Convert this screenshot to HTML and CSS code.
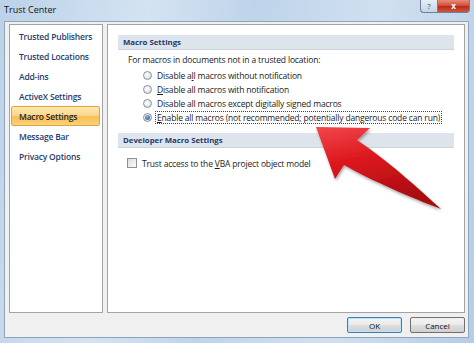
FILE: index.html
```html
<!DOCTYPE html>
<html lang="en">
<head>
  <meta charset="UTF-8">
  <title>Trust Center</title>
  <link rel="stylesheet" href="styles.css">
</head>
<body>
  <div class="window">
    <div class="titlebar">
      <span class="title">Trust Center</span>
      <div class="caption">
        <span class="cap help">?</span>
        <span class="cap close">x</span>
      </div>
    </div>

    <div class="dialog">
      <div class="panes">
        <ul class="nav">
          <li>Trusted Publishers</li>
          <li>Trusted Locations</li>
          <li>Add-ins</li>
          <li>ActiveX Settings</li>
          <li class="active">Macro Settings</li>
          <li>Message Bar</li>
          <li>Privacy Options</li>
        </ul>

        <div class="content">
          <div class="group">
            <div class="group-head">Macro Settings</div>
            <div class="lead">For macros in documents not in a trusted location:</div>
            <div class="opts">
              <label class="opt"><span class="radio"></span><span>Disable a<u>l</u>l macros without notification</span></label>
              <label class="opt"><span class="radio"></span><span><u>D</u>isable all macros with notification</span></label>
              <label class="opt"><span class="radio"></span><span>Disable all macros except di<u>g</u>itally signed macros</span></label>
              <label class="opt"><span class="radio on"></span><span class="focus"><u>E</u>nable all macros (not recommended; potentially dangerous code can run)</span></label>
            </div>
          </div>

          <div class="group">
            <div class="group-head">Developer Macro Settings</div>
            <label class="check-row"><span class="check"></span><span>Trust access to the <u>V</u>BA project object model</span></label>
          </div>
        </div>
      </div>

      <div class="footer">
        <button type="button" class="btn default">OK</button>
        <button type="button" class="btn">Cancel</button>
      </div>
    </div>

    <!-- red annotation arrow drawn over the dialog -->
    <svg class="arrow" viewBox="0 0 474 343" width="474" height="343">
      <defs>
        <linearGradient id="red" x1="0" y1="0" x2="0.3" y2="1">
          <stop offset="0" stop-color="#f2474b"/>
          <stop offset="0.45" stop-color="#dc171d"/>
          <stop offset="1" stop-color="#a90c11"/>
        </linearGradient>
        <filter id="shadow" x="-20%" y="-20%" width="140%" height="140%">
          <feDropShadow dx="1" dy="2" stdDeviation="1.5" flood-color="#000" flood-opacity="0.35"/>
        </filter>
      </defs>
      <path d="M316,127 L370,128 L357,140 C390,162 420,190 441,209 C412,198 370,180 344,165 L335,179 Z"
            fill="url(#red)" filter="url(#shadow)"/>
    </svg>
  </div>
</body>
</html>
```

FILE: styles.css
```css
html,
body {
  margin: 0;
}

body {
  width: 474px;
  height: 343px;
  overflow: hidden;
  font-family: "Open Sans", "Noto Sans", sans-serif;
  font-size: 8.5px;
  color: #1b1b1b;
}

.window {
  position: relative;
  width: 474px;
  height: 343px;
  box-sizing: border-box;
  padding: 0 5px 5px 4px;
  display: flex;
  flex-direction: column;
  background: linear-gradient(100deg, #bcd2e8 0%, #d4e3f2 28%, #bfd4ea 48%, #d0e0f0 72%, #b7cde5 100%);
}

.titlebar {
  height: 21px;
  display: flex;
  justify-content: space-between;
  align-items: flex-start;
}

.title {
  font-size: 9px;
  line-height: 19px;
  color: #111;
}

.caption {
  display: flex;
  margin-right: -1px;
}

.cap {
  height: 13px;
  box-sizing: border-box;
  display: flex;
  justify-content: center;
  align-items: center;
  border: 1px solid #6f8196;
  border-top: none;
  font-size: 8px;
  line-height: 1;
}

.help {
  width: 17px;
  border-right: none;
  border-radius: 0 0 0 4px;
  background: linear-gradient(#e6eef7, #c3d4e7);
  color: #3b4a5e;
}

.close {
  width: 33px;
  border-radius: 0 0 4px 0;
  background: linear-gradient(#e58d7b, #cf4a36 50%, #b52a17 51%, #d2553e);
  color: #fff;
  font-weight: bold;
}

.dialog {
  flex: 1;
  background-color: #f0f0f0;
  border: 1px solid #8fa4bc;
  padding: 2px 3px 0 4px;
  display: flex;
  flex-direction: column;
}

.panes {
  height: 289px;
  display: flex;
  gap: 4px;
}

.nav {
  width: 94px;
  box-sizing: border-box;
  margin: 0;
  padding: 1px 2px 0 1px;
  list-style: none;
  background-color: white;
  border: 1px solid #a3a3a3;
}

.nav li {
  height: 20px;
  box-sizing: border-box;
  display: flex;
  align-items: center;
  padding-left: 7px;
  border: 1px solid transparent;
  border-radius: 2px;
  color: #1f3d6c;
  font-weight: 600;
  letter-spacing: -0.2px;
}

.nav li.active {
  border-color: #e2a244;
  background: linear-gradient(#fde9ad, #fcd88f 45%, #f8be55 55%, #fbd27a);
  color: #23262c;
}

.content {
  flex: 1;
  background-color: white;
  border: 1px solid #a3a3a3;
  padding: 10px 10px 0;
}

.group + .group {
  margin-top: 9px;
}

.group-head {
  height: 15px;
  box-sizing: border-box;
  display: flex;
  align-items: center;
  padding-left: 5px;
  background-color: #dde4ec;
  border-bottom: 1px solid #cbd4de;
  color: #1d3a6b;
  font-weight: 700;
  font-size: 7.8px;
}

.lead {
  margin: 3px 0 0 10px;
  line-height: 14px;
  letter-spacing: -0.15px;
}

.opts {
  margin-top: 1px;
}

.opt,
.check-row {
  height: 14px;
  display: flex;
  align-items: center;
  gap: 5px;
  letter-spacing: -0.17px;
}

.opt {
  margin-left: 25px;
}

.check-row {
  margin: 8px 0 0 9px;
}

.radio {
  width: 9px;
  height: 9px;
  box-sizing: border-box;
  border-radius: 50%;
  border: 1px solid #8d9094;
  background: radial-gradient(circle at 40% 35%, #ffffff, #d2d5d9);
  display: flex;
  justify-content: center;
  align-items: center;
}

.radio.on::after {
  content: "";
  width: 5px;
  height: 5px;
  border-radius: 50%;
  background: radial-gradient(circle at 40% 35%, #7fb3e6, #1f5496);
}

.check {
  width: 10px;
  height: 10px;
  box-sizing: border-box;
  border: 1px solid #8d9094;
  background: linear-gradient(135deg, #dcdfe3, #fafafa);
}

.focus {
  border: 1px dotted #444;
  padding: 0 1px;
  margin-left: -2px;
  line-height: 11px;
}

u {
  text-underline-offset: 1px;
}

.footer {
  display: flex;
  justify-content: flex-end;
  gap: 8px;
  margin-top: 4px;
}

.btn {
  width: 55px;
  height: 16px;
  padding: 0;
  font-family: inherit;
  font-size: 8px;
  color: #111;
  border: 1px solid #707070;
  border-radius: 2px;
  background: linear-gradient(#f3f3f3, #ebebeb 50%, #dddddd 51%, #d0d0d0);
}

.btn.default {
  border-color: #3c7fb1;
  box-shadow: inset 0 0 0 1px #bde4f8;
}

.arrow {
  position: absolute;
  left: 0;
  top: 0;
  pointer-events: none;
}
```
